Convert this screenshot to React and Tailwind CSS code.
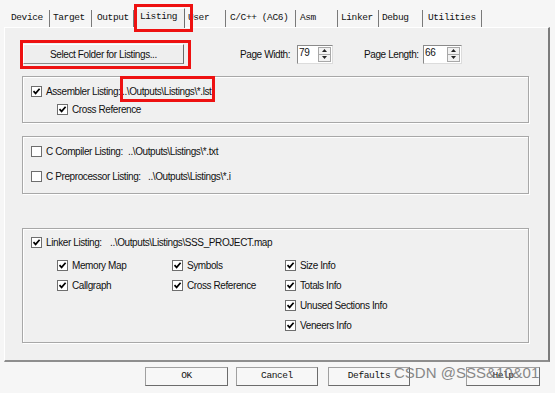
import React from "react";

const SANS = "font-['Liberation_Sans',Arial,sans-serif] text-[10px] tracking-[-0.4px] text-[#111] whitespace-nowrap";
const MONO = "font-['Liberation_Mono',monospace] text-[9.5px] tracking-[-0.4px] text-[#111] whitespace-nowrap";

function Cb({ checked = true }) {
  return (
    <span className="w-[11px] h-[11px] border border-[#6e6e6e] bg-white flex items-center justify-center shrink-0">
      {checked && (
        <svg width="9" height="9" viewBox="0 0 9 9">
          <path d="M1.5 4.2 L3.6 6.4 L7.6 1.8" stroke="#000" strokeWidth="1.7" fill="none" />
        </svg>
      )}
    </span>
  );
}

function Row({ checked = true, children, className = "" }) {
  return (
    <div className={"flex items-center gap-[4px] h-[11px] " + className}>
      <Cb checked={checked} />
      {children}
    </div>
  );
}

function RedBox({ className }) {
  return <span className={"absolute border-[3px] border-[#ee1111] z-20 pointer-events-none " + className} />;
}

function Spin({ value, w }) {
  return (
    <div className={"flex h-[19px] border border-[#8a8a8a] border-r-[#dcdcdc] border-b-[#dcdcdc] bg-white " + w}>
      <span className={SANS + " flex-1 pl-[1px] leading-[14px]"}>{value}</span>
      <div className="w-[13px] flex flex-col my-[1px] mr-[1px]">
        <div className="flex-1 flex items-center justify-center bg-[#f2f2f2] border border-[#a8a8a8]">
          <svg width="5" height="3" viewBox="0 0 5 3"><path d="M0 3 L2.5 0 L5 3 Z" fill="#222" /></svg>
        </div>
        <div className="flex-1 flex items-center justify-center bg-[#f2f2f2] border border-t-0 border-[#a8a8a8]">
          <svg width="5" height="3" viewBox="0 0 5 3"><path d="M0 0 L2.5 3 L5 0 Z" fill="#222" /></svg>
        </div>
      </div>
    </div>
  );
}

const tabs = [
  { t: "Device", w: "w-[45px]", pl: "pl-[6px]" },
  { t: "Target", w: "w-[42px]", pl: "pl-[3px]" },
  { t: "Output", w: "w-[42px]", pl: "pl-[5px]" },
  { t: "Listing", w: "w-[51px]", pl: "pl-[5px]", sel: true },
  { t: "User", w: "w-[41px]", pl: "pl-[3px]" },
  { t: "C/C++ (AC6)", w: "w-[70px]", pl: "pl-[4px]" },
  { t: "Asm", w: "w-[42px]", pl: "pl-[4px]" },
  { t: "Linker", w: "w-[41px]", pl: "pl-[3px]" },
  { t: "Debug", w: "w-[44px]", pl: "pl-[3px]" },
  { t: "Utilities", w: "w-[59px]", pl: "pl-[5px]" },
];

const group = "w-[507px] border border-[#a8a8a8] shadow-[inset_1px_1px_0_#ffffff,1px_1px_0_#ffffff] pl-[8px]";

function Btn({ children, className = "" }) {
  return (
    <div className={"h-[19px] bg-[#f7f7f7] border border-[#a0a0a0] border-r-[#6c6c6c] border-b-[#6c6c6c] flex items-center justify-center " + MONO + " " + className}>
      {children}
    </div>
  );
}

export default function App() {
  return (
    <div className="w-[555px] h-[393px] bg-[#f6f6f6] overflow-hidden relative">
      {/* Tabs */}
      <div className="h-[27px] pl-[5px] flex items-end">
        {tabs.map((tab) =>
          tab.sel ? (
            <div key={tab.t} className={"relative z-10 h-[20px] -mb-[1px] bg-[#f0f0f0] border-l border-t border-white border-r border-r-[#6e6e6e] flex items-center pb-[3px] " + tab.w + " " + tab.pl}>
              <span className={MONO}>{tab.t}</span>
              <RedBox className="-left-[1px] -top-[5px] w-[59px] h-[28px]" />
            </div>
          ) : (
            <div key={tab.t} className={"h-[17px] flex items-center pb-[1px] border-r border-[#7a7a7a] " + tab.w + " " + tab.pl}>
              <span className={MONO}>{tab.t}</span>
            </div>
          )
        )}
      </div>

      {/* Panel */}
      <div className="ml-[4px] w-[546px] h-[335px] bg-[#f0f0f0] border-l border-t border-white border-r-2 border-r-[#7b7b7b] border-b-2 border-b-[#8e8e8e] pl-[17px] pt-[16px] flex flex-col">
        {/* top row */}
        <div className="flex items-center h-[20px]">
          <div className="relative ml-[1px] w-[161px] h-[20px] bg-[#eeeeee] border border-white border-r-[#6a6a6a] border-b-[#8a8a8a] flex items-center justify-center">
            <span className={SANS}>Select Folder for Listings...</span>
            <RedBox className="-left-[4px] -top-[5px] w-[171px] h-[29px]" />
          </div>
          <span className={SANS + " ml-[56px] w-[57px]"}>Page Width:</span>
          <Spin value="79" w="w-[36px]" />
          <span className={SANS + " ml-[31px] w-[59px]"}>Page Length:</span>
          <Spin value="66" w="w-[39px]" />
        </div>

        {/* Group 1 */}
        <div className={group + " mt-[12px] h-[47px] pt-[9px]"}>
          <Row>
            <span className="flex">
              <span className={SANS + " w-[76px] shrink-0"}>Assembler Listing:</span>
              <span className={SANS + " relative"}>
                ..\Outputs\Listings\*.lst
                <RedBox className="-left-[2px] -top-[8px] w-[95px] h-[26px]" />
              </span>
            </span>
          </Row>
          <Row className="mt-[7px] ml-[26px]">
            <span className={SANS}>Cross Reference</span>
          </Row>
        </div>

        {/* Group 2 */}
        <div className={group + " mt-[13px] h-[58px] pt-[9px]"}>
          <Row checked={false}>
            <span className="flex">
              <span className={SANS + " w-[82px] shrink-0"}>C Compiler Listing:</span>
              <span className={SANS}>..\Outputs\Listings\*.txt</span>
            </span>
          </Row>
          <Row checked={false} className="mt-[14px]">
            <span className="flex">
              <span className={SANS + " w-[102px] shrink-0"}>C Preprocessor Listing:</span>
              <span className={SANS}>..\Outputs\Listings\*.i</span>
            </span>
          </Row>
        </div>

        {/* Group 3 */}
        <div className={group + " mt-[34px] h-[115px] pt-[8px]"}>
          <Row>
            <span className="flex">
              <span className={SANS + " w-[64px] shrink-0"}>Linker Listing:</span>
              <span className={SANS}>..\Outputs\Listings\SSS_PROJECT.map</span>
            </span>
          </Row>
          <div className="mt-[12px] ml-[26px] grid grid-cols-[115px_113px_1fr] gap-y-[9px]">
            <Row><span className={SANS}>Memory Map</span></Row>
            <Row><span className={SANS}>Symbols</span></Row>
            <Row><span className={SANS}>Size Info</span></Row>
            <Row><span className={SANS}>Callgraph</span></Row>
            <Row><span className={SANS}>Cross Reference</span></Row>
            <Row><span className={SANS}>Totals Info</span></Row>
            <div />
            <div />
            <Row><span className={SANS}>Unused Sections Info</span></Row>
            <div />
            <div />
            <Row><span className={SANS}>Veneers Info</span></Row>
          </div>
        </div>
      </div>

      {/* Buttons */}
      <div className="flex mt-[5px]">
        <Btn className="ml-[145px] w-[83px] border-[#5a5a5a]">OK</Btn>
        <Btn className="ml-[8px] w-[82px]">Cancel</Btn>
        <Btn className="ml-[10px] w-[82px]">Defaults</Btn>
        <Btn className="ml-[56px] w-[74px]">Help</Btn>
      </div>

      {/* Watermark */}
      <span className="absolute left-[394px] top-[365px] font-['Liberation_Sans',Arial,sans-serif] text-[15px] leading-none text-[#7c7c7c] opacity-90 whitespace-nowrap z-30">
        CSDN @SSS&amp;10&amp;01
      </span>
    </div>
  );
}
